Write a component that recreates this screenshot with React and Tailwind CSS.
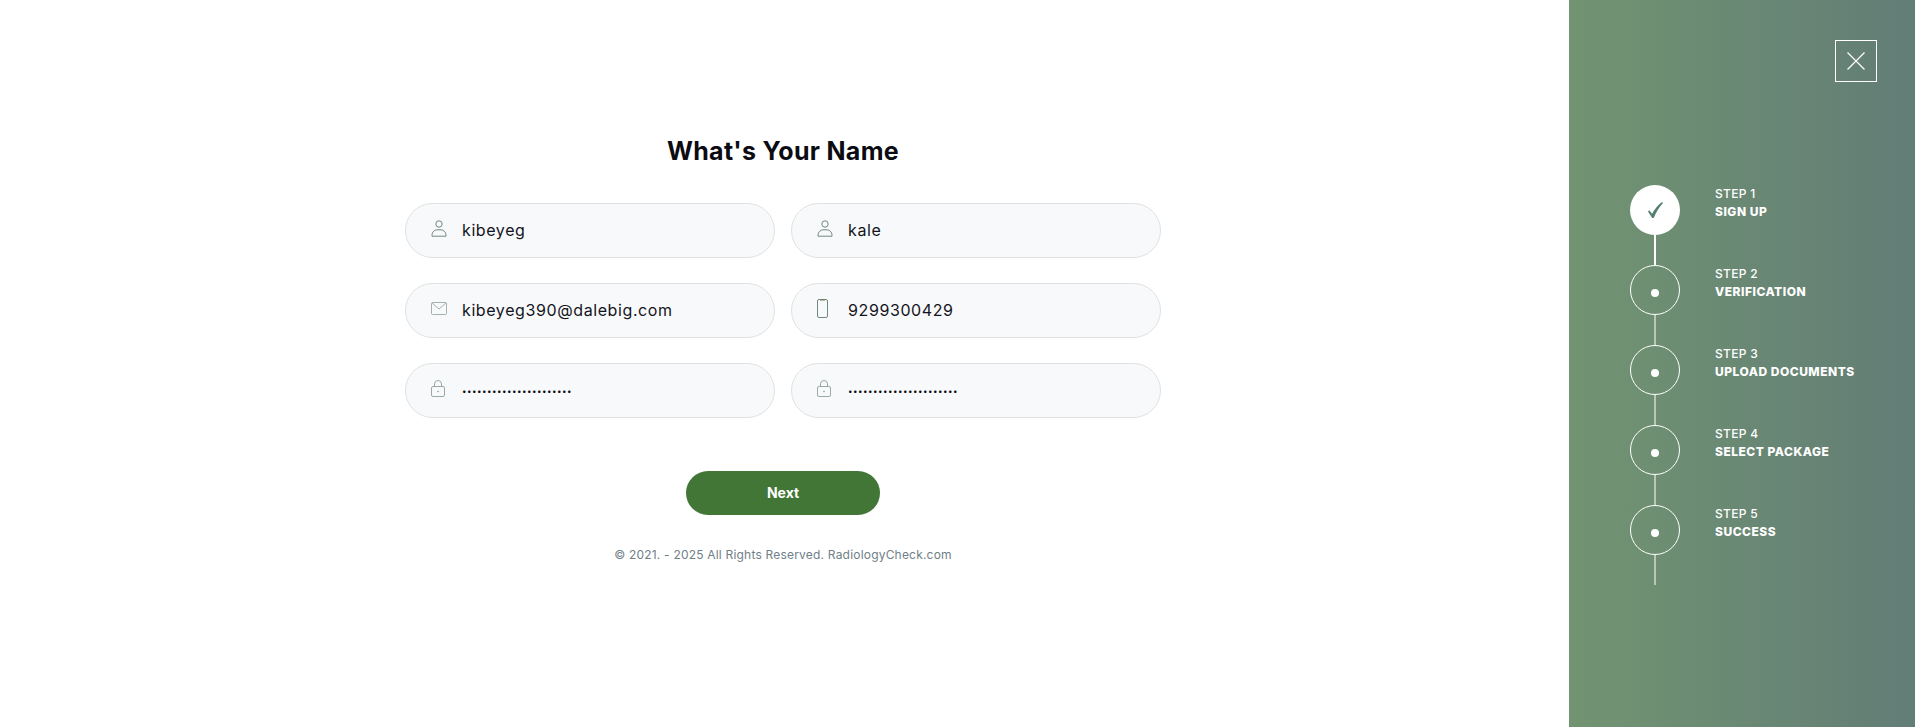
import React from "react";

const UserIcon = () => (
  <svg width="16" height="17" viewBox="0 0 16 17" fill="none" stroke="#73887f" strokeWidth="1">
    <circle cx="8" cy="4" r="3.2" />
    <path d="M1 16.2v-1.4C1 12 3.6 9.8 6 9.8h4c2.400 0 5 2.200 5 5v1.400z" />
  </svg>
);

const MailIcon = () => (
  <svg width="16" height="13" viewBox="0 0 16 13" fill="none" stroke="#a3b0ad" strokeWidth="1">
    <rect x="0.5" y="0.5" width="15" height="12" rx="1" />
    <path d="M1 1l7 6 7-6" />
  </svg>
);

const PhoneIcon = () => (
  <svg width="11" height="19" viewBox="0 0 11 19" fill="none" stroke="#71897f" strokeWidth="1">
    <rect x="0.5" y="0.5" width="10" height="18" rx="1.500" />
    <path d="M3 1h5" stroke="#8a6f4f" />
  </svg>
);

const LockIcon = () => (
  <svg width="14" height="17" viewBox="0 0 14 17" fill="none" stroke="#9aa9a6" strokeWidth="1">
    <rect x="0.5" y="6.500" width="13" height="10" rx="1.500" />
    <path d="M3.500 6.500V4a3.500 3.500 0 0 1 7 0v2.500" />
    <circle cx="7" cy="11.500" r="0.700" fill="#71897f" stroke="none" />
  </svg>
);

const fields = [
  { icon: <UserIcon />, value: "kibeyeg" },
  { icon: <UserIcon />, value: "kale" },
  { icon: <MailIcon />, value: "kibeyeg390@dalebig.com" },
  { icon: <PhoneIcon />, value: "9299300429" },
  { icon: <LockIcon />, value: "••••••••••••••••••••••", password: true },
  { icon: <LockIcon />, value: "••••••••••••••••••••••", password: true },
];

const steps = [
  { label: "STEP 1", title: "SIGN UP", done: true },
  { label: "STEP 2", title: "VERIFICATION" },
  { label: "STEP 3", title: "UPLOAD DOCUMENTS" },
  { label: "STEP 4", title: "SELECT PACKAGE" },
  { label: "STEP 5", title: "SUCCESS" },
];

const Field = ({ icon, value, password }) => (
  <div className="h-[55px] flex items-center pl-[25px] bg-[#f8f9fb] border border-[#dfe2e3] rounded-[27.500px]">
    <div className="w-[31px] -mt-[4px] flex justify-start shrink-0">{icon}</div>
    {password ? (
      <span className="text-[8px] tracking-[0.5px] text-[#0b0b12]">{value}</span>
    ) : (
      <span className="-mt-[1px] text-[16px] tracking-[0.6px] text-[#14141c]">{value}</span>
    )}
  </div>
);

const Step = ({ label, title, done }) => (
  <div className="flex">
    <div className="flex flex-col items-center w-[50px]">
      {done ? (
        <div className="w-[50px] h-[50px] rounded-full bg-white flex items-center justify-center">
          <svg width="15" height="16" viewBox="0 0 15 16" fill="#55806f">
            <path d="M0 9.500L1.200 8.300L4.200 11.800Q7.500 5 14 0L15 1Q9 7.500 5.800 16L4.200 16z" />
          </svg>
        </div>
      ) : (
        <div className="w-[50px] h-[50px] rounded-full border border-white flex items-center justify-center">
          <div className="w-2 h-2 mt-[5px] rounded-full bg-white" />
        </div>
      )}
      <div className={`w-[2px] h-[30px] ${done ? "bg-white" : "bg-white/50"}`} />
    </div>
    <div className="ml-[35px] text-white text-[12px] leading-[18px]">
      <div className="font-medium tracking-[0.3px]">{label}</div>
      <div className="font-extrabold tracking-[0.5px]">{title}</div>
    </div>
  </div>
);

export default function App() {
  return (
    <div className="flex h-screen w-full overflow-hidden bg-white font-['Inter',sans-serif]">
      <main className="flex-1 flex flex-col items-center pt-[134px] pr-[3px]">
        <h1 className="text-[25px] leading-[34px] font-bold tracking-[0.3px] text-[#0b0b12]">What's Your Name</h1>
        <div className="mt-[35px] grid grid-cols-2 gap-x-4 gap-y-[25px] w-[756px]">
          {fields.map((f, i) => (
            <Field key={i} {...f} />
          ))}
        </div>
        <button className="mt-[53px] w-[194px] h-[44px] pb-[1px] rounded-[22px] bg-[#417637] text-white text-[14px] font-bold">
          Next
        </button>
        <p className="mt-[30px] text-[12px] leading-5 tracking-[0.2px] text-[#6f8088]">
          © 2021. - 2025 All Rights Reserved. RadiologyCheck.com
        </p>
      </main>
      <aside className="w-[346px] shrink-0 bg-gradient-to-r from-[#729471] to-[#627d76] flex flex-col">
        <div className="flex justify-end pt-10 pr-[38px]">
          <button className="w-[42px] h-[42px] border border-white flex items-center justify-center">
            <svg width="18" height="18" viewBox="0 0 18 18" stroke="#fff" strokeWidth="1.200">
              <path d="M0.500 0.500l17 17M17.500 0.500l-17 17" />
            </svg>
          </button>
        </div>
        <div className="mt-[103px] pl-[61px]">
          {steps.map((s) => (
            <Step key={s.label} {...s} />
          ))}
        </div>
      </aside>
    </div>
  );
}
